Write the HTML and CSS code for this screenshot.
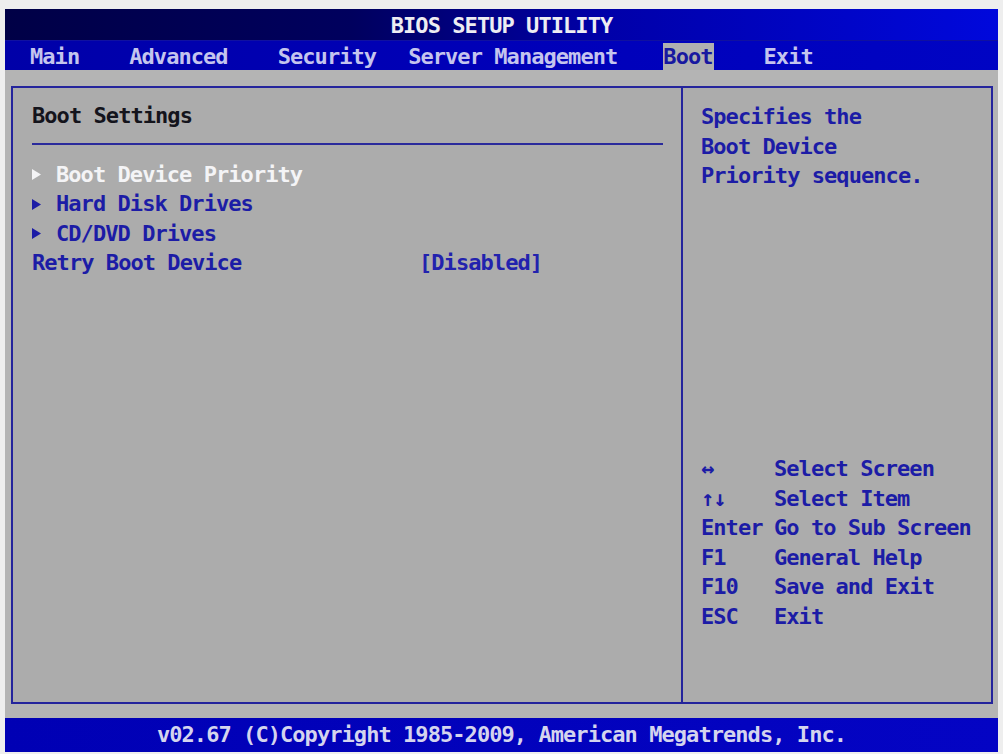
FILE: index.html
```html
<!DOCTYPE html>
<html lang="en">
<head>
<meta charset="utf-8">
<title>BIOS SETUP UTILITY</title>
<link rel="stylesheet" href="styles.css">
</head>
<body>
<div class="screen">
  <header class="titlebar">BIOS SETUP UTILITY</header>
  <nav class="menubar">
    <span class="tab">Main</span>
    <span class="tab">Advanced</span>
    <span class="tab">Security</span>
    <span class="tab tab-server">Server Management</span>
    <span class="tab tab-boot tab-active">Boot</span>
    <span class="tab">Exit</span>
  </nav>
  <main class="body">
    <div class="frame">
      <section class="panel-left">
        <div class="heading">Boot Settings</div>
        <div class="rule"></div>
        <div class="row item item-active"><span class="arrow"><svg width="9" height="11" viewBox="0 0 9 11"><path d="M0 0 L9 5.5 L0 11 Z" fill="currentColor"/></svg></span>Boot Device Priority</div>
        <div class="row item"><span class="arrow"><svg width="9" height="11" viewBox="0 0 9 11"><path d="M0 0 L9 5.5 L0 11 Z" fill="currentColor"/></svg></span>Hard Disk Drives</div>
        <div class="row item"><span class="arrow"><svg width="9" height="11" viewBox="0 0 9 11"><path d="M0 0 L9 5.5 L0 11 Z" fill="currentColor"/></svg></span>CD/DVD Drives</div>
        <div class="row setting"><span class="label">Retry Boot Device</span><span class="value">[Disabled]</span></div>
      </section>
      <aside class="panel-right">
        <div class="help">
          <div class="row">Specifies the</div>
          <div class="row">Boot Device</div>
          <div class="row">Priority sequence.</div>
        </div>
        <div class="keys">
          <span class="key">↔</span><span class="desc">Select Screen</span>
          <span class="key">↑↓</span><span class="desc">Select Item</span>
          <span class="key">Enter</span><span class="desc">Go to Sub Screen</span>
          <span class="key">F1</span><span class="desc">General Help</span>
          <span class="key">F10</span><span class="desc">Save and Exit</span>
          <span class="key">ESC</span><span class="desc">Exit</span>
        </div>
      </aside>
    </div>
  </main>
  <footer class="footer">v02.67 (C)Copyright 1985-2009, American Megatrends, Inc.</footer>
</div>
</body>
</html>
```

FILE: styles.css
```css
* { box-sizing: border-box; }

html, body {
  margin: 0;
  padding: 0;
}

body {
  background: #eeeeee;
  width: 1003px;
  height: 754px;
  overflow: hidden;
  font-family: "DejaVu Sans Mono", "Liberation Mono", monospace;
  font-weight: bold;
  font-size: 22px;
  letter-spacing: -0.94px;
}

.screen {
  margin: 9px 5px 0 5px;
  width: 993px;
  display: flex;
  flex-direction: column;
}

.titlebar {
  height: 31px;
  line-height: 31px;
  padding-top: 1px;
  text-align: center;
  color: #ededf2;
  background: linear-gradient(90deg, #000046 0%, #00005e 35%, #0000a8 60%, #0008dc 100%);
  white-space: pre;
}

.menubar {
  height: 30px;
  padding: 2px 0 0 25px;
  display: flex;
  gap: 50px;
  background: linear-gradient(90deg, #0000a8 0%, #0000b8 50%, #0004c4 100%);
  border-top: 1px solid #1010a0;
}

.tab {
  height: 28px;
  line-height: 27px;
  color: #c4c4ee;
  white-space: pre;
}

.tab-server { margin-left: -18px; }
.tab-boot { margin-left: -4px; }

.tab-active {
  background: #b0b0b0;
  color: #1818a0;
  padding: 0 1px 0 0;
}

.body {
  background: #b4b4b4;
  height: 648px;
  padding: 16px 5px 14px 6px;
}

.frame {
  height: 618px;
  border: 2px solid #24249c;
  background: #acacac;
  display: grid;
  grid-template-columns: 670px 1fr;
}

.row {
  height: 29.5px;
  line-height: 29.5px;
  white-space: pre;
}

.panel-left {
  border-right: 2px solid #24249c;
  padding: 13px 18px 0 19px;
}

.heading {
  height: 29.5px;
  line-height: 29.5px;
  color: #14141c;
}

.rule {
  height: 2px;
  background: #2a2a9c;
  margin: 12px 0 15px 0;
}

.item {
  display: flex;
  align-items: center;
  color: #1c1ca6;
}

.item-active { color: #f4f4f6; }

.arrow {
  width: 24px;
  display: flex;
  align-items: center;
}

.arrow svg { display: block; margin-top: 1px; }

.setting {
  display: grid;
  grid-template-columns: 387px auto;
  color: #1c1ca6;
}

.value { color: #2222ae; }

.panel-right {
  padding: 14px 10px 71px 18px;
  display: flex;
  flex-direction: column;
  color: #1c1ca6;
}

.keys {
  margin-top: auto;
  display: grid;
  grid-template-columns: 73px auto;
  grid-auto-rows: 29.5px;
  line-height: 29.5px;
}

.key, .desc { white-space: pre; }

.footer {
  height: 34px;
  line-height: 34px;
  text-align: center;
  color: #d4d4ee;
  background: linear-gradient(90deg, #0000b4 0%, #0404c4 100%);
  white-space: pre;
}
```
